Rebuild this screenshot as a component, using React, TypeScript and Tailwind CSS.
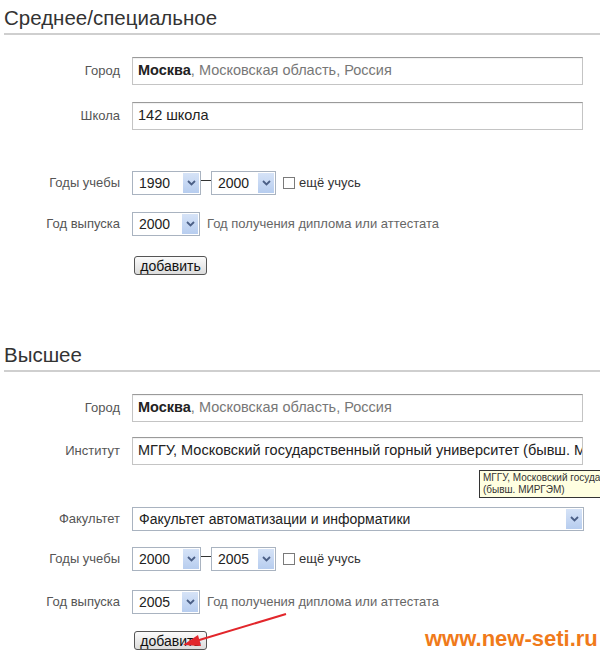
import type { ReactNode } from "react";

function Label({ children }: { children: ReactNode }) {
  return <div className="w-[120px] shrink-0 text-right text-[13px] text-[#555]">{children}</div>;
}

function TextBox({ children }: { children: ReactNode }) {
  return (
    <div className="ml-3 flex h-7 w-[451px] items-center overflow-hidden whitespace-nowrap border border-[#c4c4c4] border-t-[#9a9a9a] bg-white pl-[5px] text-[14.5px] text-[#222] shadow-[inset_0_1px_1px_rgba(0,0,0,0.06)]">
      {children}
    </div>
  );
}

function Select({ value, width }: { value: string; width: string }) {
  return (
    <div className={`flex h-6 items-center justify-between border border-[#a9b3c0] bg-white pl-[6px] text-[14px] text-[#222] ${width}`}>
      <span className="truncate">{value}</span>
      <span className="m-px flex h-[20px] w-[16px] shrink-0 items-center justify-center bg-gradient-to-b from-[#d6e3f7] to-[#b7cdef]">
        <svg width="9" height="6" viewBox="0 0 9 6">
          <path d="M1 1 L4.5 4.5 L8 1" fill="none" stroke="#4b5f86" strokeWidth="1.8" />
        </svg>
      </span>
    </div>
  );
}

function Button() {
  return (
    <button className="ml-[14px] h-[19px] w-[73px] rounded-[3px] border border-[#555] bg-gradient-to-b from-[#fbfbfb] to-[#dcdcdc] text-[14px] leading-none text-[#111]">
      добавить
    </button>
  );
}

function Heading({ children, className }: { children: ReactNode; className?: string }) {
  return (
    <h2 className={`ml-1 border-b-2 border-[#cfcfcf] pb-[3px] text-[20.5px] leading-6 text-[#333] ${className ?? ""}`}>
      {children}
    </h2>
  );
}

function Years({ from, to }: { from: string; to: string }) {
  return (
    <div className="flex items-center">
      <Label>Годы учебы</Label>
      <div className="ml-3 flex items-center">
        <Select value={from} width="w-[69px]" />
        <span className="h-px w-[10px] -translate-y-[3px] bg-[#333]" />
        <Select value={to} width="w-[65px]" />
        <span className="ml-[7px] h-3 w-3 border border-[#7a7a7a] bg-white" />
        <span className="ml-1 text-[13px] text-[#333]">ещё учусь</span>
      </div>
    </div>
  );
}

function Graduation({ year }: { year: string }) {
  return (
    <div className="flex items-center">
      <Label>Год выпуска</Label>
      <div className="ml-3 flex items-center">
        <Select value={year} width="w-[68px]" />
        <span className="ml-[7px] text-[13px] text-[#666]">Год получения диплома или аттестата</span>
      </div>
    </div>
  );
}

function City() {
  return (
    <div className="flex items-center">
      <Label>Город</Label>
      <TextBox>
        <b>Москва</b>
        <span className="text-[#777]">, Московская область, Россия</span>
      </TextBox>
    </div>
  );
}

export default function App() {
  return (
    <div className="relative h-[658px] w-[600px] overflow-hidden bg-white pt-[6px] font-['Liberation_Sans',Arial,sans-serif]">
      <Heading>Среднее/специальное</Heading>
      <div className="mt-[22px]">
        <City />
      </div>
      <div className="mt-[17px] flex items-center">
        <Label>Школа</Label>
        <TextBox>142 школа</TextBox>
      </div>
      <div className="mt-[41px]">
        <Years from="1990" to="2000" />
      </div>
      <div className="mt-[17px]">
        <Graduation year="2000" />
      </div>
      <div className="mt-[20px] flex">
        <div className="w-[120px]" />
        <Button />
      </div>

      <Heading className="mt-[68px]">Высшее</Heading>
      <div className="mt-[22px]">
        <City />
      </div>
      <div className="mt-[15px] flex items-center">
        <Label>Институт</Label>
        <TextBox>МГГУ, Московский государственный горный университет (бывш. МИРГЭМ)</TextBox>
      </div>
      <div className="mt-[42px] flex items-center">
        <Label>Факультет</Label>
        <div className="ml-3">
          <Select value="Факультет автоматизации и информатики" width="w-[452px] border-[#777]" />
        </div>
      </div>
      <div className="mt-[16px]">
        <Years from="2000" to="2005" />
      </div>
      <div className="mt-[19px]">
        <Graduation year="2005" />
      </div>
      <div className="mt-[17px] flex">
        <div className="w-[120px]" />
        <Button />
      </div>

      {/* tooltip over the institute field */}
      <div className="absolute left-[479px] top-[470px] whitespace-nowrap border border-[#333] bg-[#ffffe1] px-[3px] py-px text-[10px] leading-[12px] text-[#333]">
        МГГУ, Московский государственный горный университет
        <br />
        (бывш. МИРГЭМ)
      </div>

      {/* red annotation arrow */}
      <svg className="absolute left-0 top-0" width="600" height="658">
        <line x1="286" y1="614" x2="196" y2="641" stroke="#e2262b" strokeWidth="2" />
        <polygon points="183,645 198,635 201,646" fill="#e2262b" />
      </svg>

      <div className="absolute left-[425px] top-[627px] text-[22px] font-bold leading-6 text-[#f07a1a]">
        www.new-seti.ru
      </div>
    </div>
  );
}
